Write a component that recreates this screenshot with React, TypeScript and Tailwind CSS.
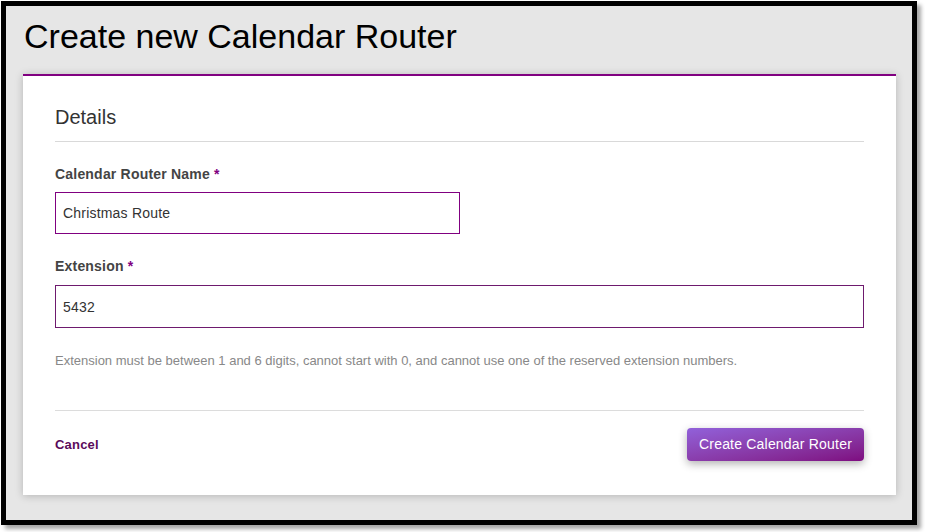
import React from 'react';

const font = { fontFamily: '"Liberation Sans", Arial, sans-serif' };

const Label: React.FC<{ text: string }> = ({ text }) => (
  <label className="block text-[14px] leading-[20px] font-bold text-[#444] tracking-[0.2px]">
    {text} <span className="text-[#800080]">*</span>
  </label>
);

export default function App() {
  return (
    <div className="w-[925px] h-[532px] bg-white" style={font}>
      <div className="ml-[1px] mt-[1px] w-[916px] h-[524px] border-[5px] border-black bg-[#e6e6e6] shadow-[4px_4px_4px_rgba(0,0,0,0.35)] flex flex-col">
        <h1 className="pl-[18px] pt-[10px] text-[34px] leading-[40px] text-black">Create new Calendar Router</h1>

        <div className="ml-[17px] mr-[16px] mt-[18px] bg-white border-t-2 border-[#800080] shadow-[0_1px_8px_rgba(0,0,0,0.22)] px-8 pt-[29px] pb-[34px]">
          <div className="border-b border-[#d9d9d9] pb-[12px]">
            <h2 className="text-[20px] leading-[24px] text-[#333]">Details</h2>
          </div>

          <div className="mt-[22px]">
            <Label text="Calendar Router Name" />
            <input
              className="mt-[8px] block w-[405px] h-[42px] border border-[#800080] px-[7px] text-[14px] text-[#333] outline-none tracking-[0.2px]"
              defaultValue="Christmas Route"
            />
          </div>

          <div className="mt-[22px]">
            <Label text="Extension" />
            <input
              className="mt-[9px] block w-full h-[43px] border border-[#6e1a6e] px-[7px] text-[14px] text-[#333] outline-none tracking-[0.2px]"
              defaultValue="5432"
            />
          </div>

          <p className="mt-[24px] text-[13px] leading-[18px] text-[#888]">
            Extension must be between 1 and 6 digits, cannot start with 0, and cannot use one of the reserved extension numbers.
          </p>

          <div className="mt-[40px] border-t border-[#dcdcdc] pt-[17px] flex items-center justify-between">
            <a className="text-[13px] font-bold text-[#5a0b5a] tracking-[0.2px] cursor-pointer">Cancel</a>
            <button className="w-[177px] h-[33px] rounded-[4px] bg-linear-to-br from-[#9161da] to-[#7e0a80] text-white text-[14px] tracking-[0.2px] shadow-[0_3px_8px_rgba(0,0,0,0.3)]">
              Create Calendar Router
            </button>
          </div>
        </div>
      </div>
    </div>
  );
}
